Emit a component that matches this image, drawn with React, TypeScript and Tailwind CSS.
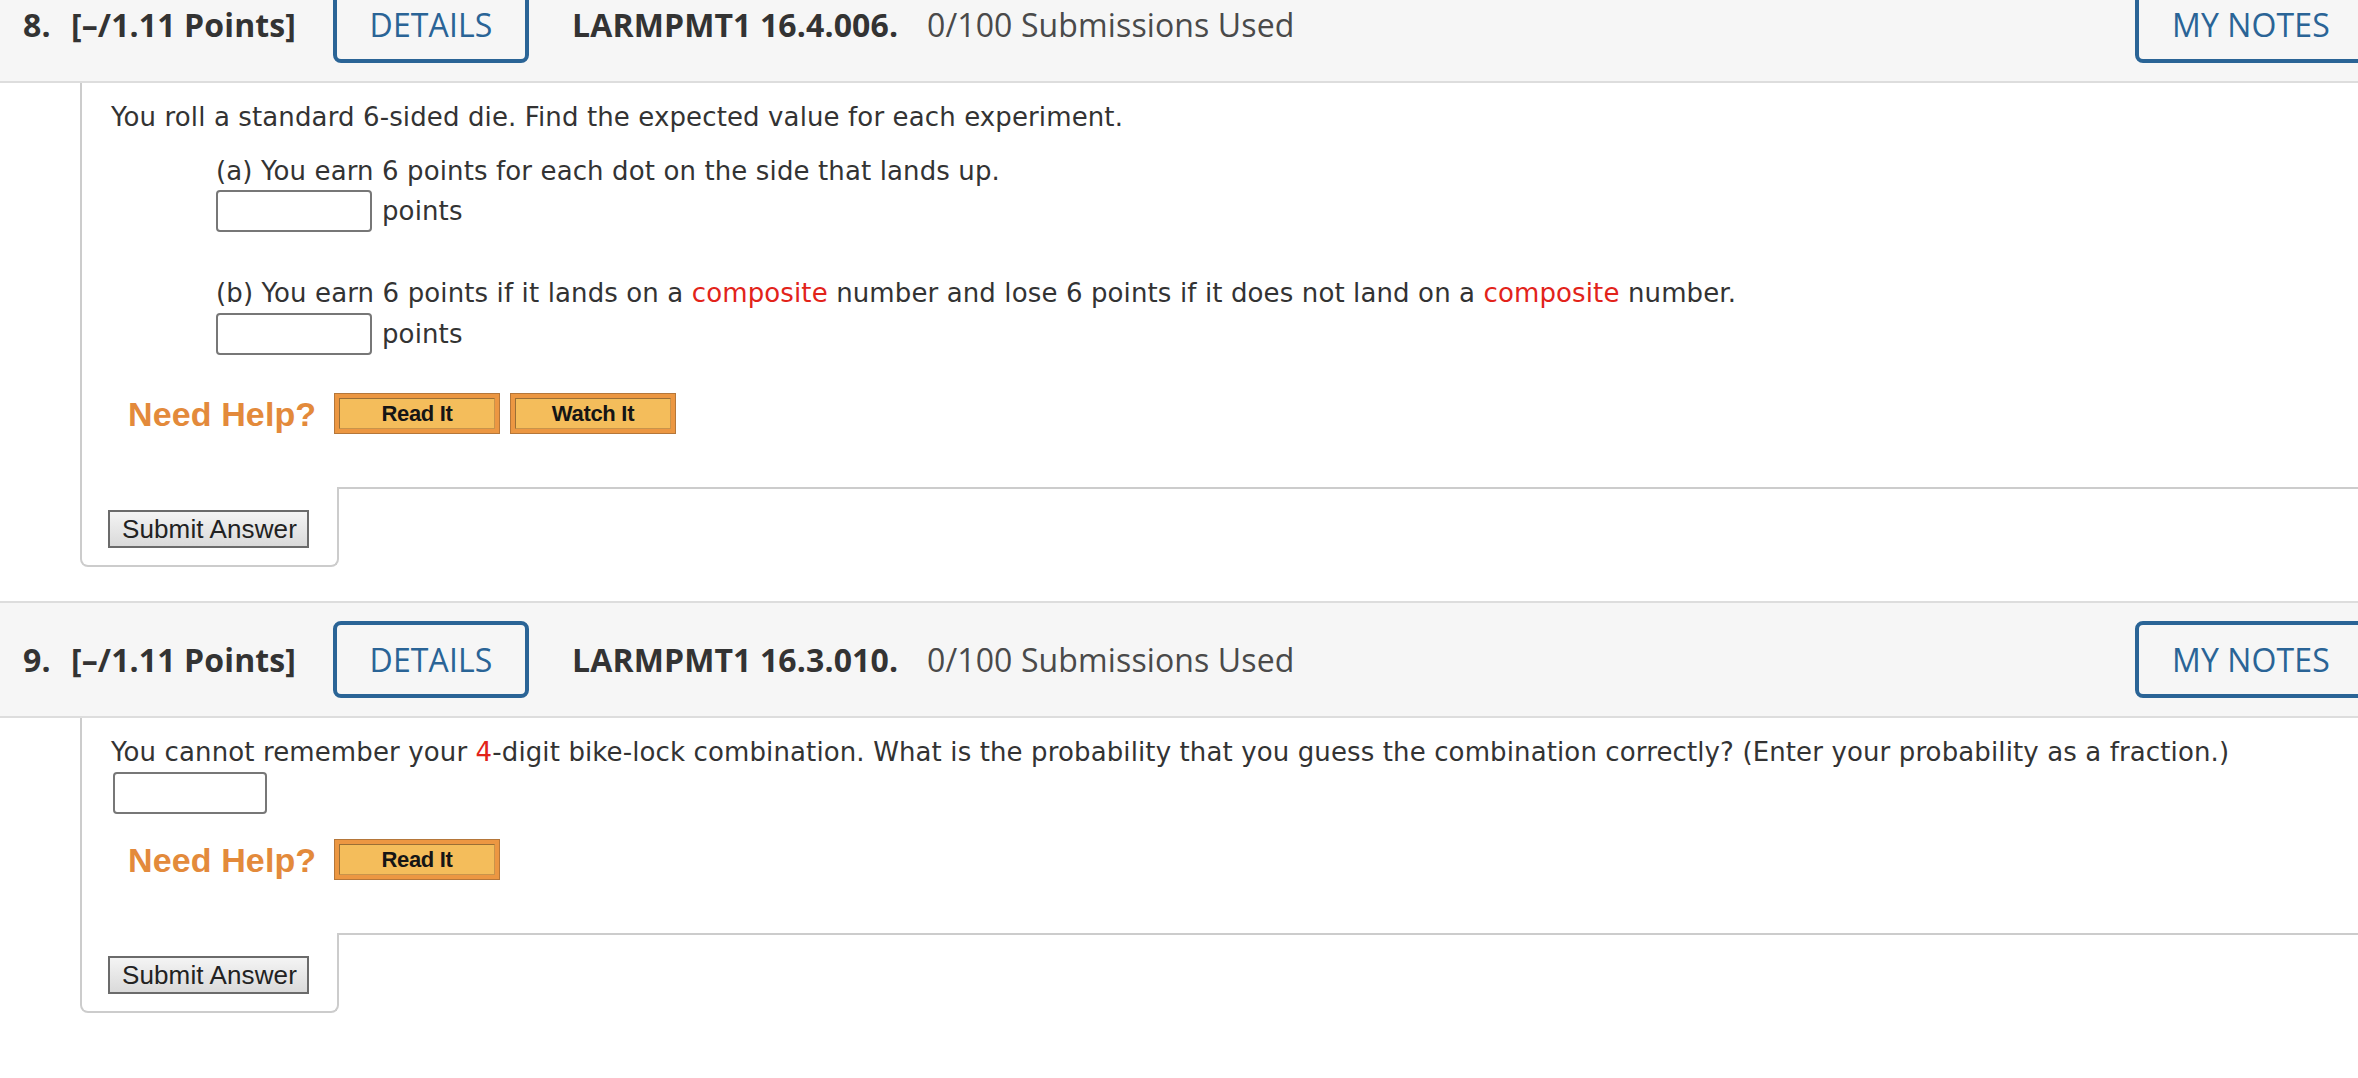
import React from "react";

const HELP_BTN = "h-[41px] w-[166px] border border-[#b5773a] bg-[#ec9742] p-[4px]";

const HelpButton = ({ label }: { label: string }) => (
  <div className={HELP_BTN}>
    <div className="flex h-full items-center justify-center border border-t-[#9a6f35] border-l-[#9a6f35] border-r-[#c9944a] border-b-[#c9944a] bg-[#f4bd5b] font-['Liberation_Sans',Arial,sans-serif] text-[22px] font-bold tracking-[-0.3px] text-[#151515]">
      {label}
    </div>
  </div>
);

const Header = ({ num, code }: { num: number; code: string }) => (
  <div className="flex h-[117px] items-center overflow-hidden border-y-2 border-[#dddddd] bg-[#f6f6f6] font-['Open_Sans',sans-serif] text-[32px] text-[#333333]">
    <div className="flex w-[333px] shrink-0 pl-[23px]">
      <span className="w-[48px] font-bold">{num}.</span>
      <span className="font-bold">[–/1.11 Points]</span>
    </div>
    <div className="flex h-[77px] w-[196px] shrink-0 items-center justify-center rounded-[8px] border-4 border-[#2a6496] text-[#2a6496]">
      DETAILS
    </div>
    <span className="ml-[43px] w-[355px] shrink-0 font-bold">{code}</span>
    <span className="shrink-0 text-[#4a4a4a]">0/100 Submissions Used</span>
    <div className="ml-auto mr-[-28px] flex h-[77px] w-[251px] shrink-0 items-center rounded-[8px] border-4 border-[#2a6496] pl-[33px] text-[#2a6496]">
      MY NOTES
    </div>
  </div>
);

const Input = ({ w }: { w: string }) => (
  <div className={`h-[42px] ${w} rounded-[4px] border-2 border-[#777777] bg-white`} />
);

const SubmitRow = () => (
  <div className="ml-[80px] flex">
    <div className="h-[80px] w-[259px] shrink-0 rounded-b-[8px] border-2 border-t-0 border-[#cccccc] pl-[26px] pt-[23px]">
      <div className="flex h-[38px] w-[201px] items-center border-2 border-[#6b6b6b] bg-gradient-to-b from-[#f4f4f4] to-[#dadada] pl-[12px] font-['Liberation_Sans',Arial,sans-serif] text-[26px] text-[#222222]">
        Submit Answer
      </div>
    </div>
    <div className="flex-1 border-t-2 border-[#cccccc]" />
  </div>
);

const NeedHelp = ({ watch }: { watch?: boolean }) => (
  <div className="flex items-center">
    <span className="ml-[17px] w-[206px] font-['Liberation_Sans',Arial,sans-serif] text-[34px] font-bold text-[#e38a3b]">
      Need Help?
    </span>
    <div className="flex gap-[10px]">
      <HelpButton label="Read It" />
      {watch && <HelpButton label="Watch It" />}
    </div>
  </div>
);

export default function App() {
  return (
    <div className="min-h-screen w-full overflow-hidden bg-white">
      <div className="-mt-[34px] font-['DejaVu_Sans',Verdana,sans-serif] text-[26px] leading-[34px] tracking-[0.12px] text-[#333333]">
        <Header num={8} code="LARMPMT1 16.4.006." />
        <div className="ml-[80px] border-l-2 border-[#cccccc] pb-[53px] pl-[29px] pt-[17px]">
          <p>You roll a standard 6-sided die. Find the expected value for each experiment.</p>
          <div className="ml-[105px] mt-[20px]">
            <p>(a) You earn 6 points for each dot on the side that lands up.</p>
            <div className="mt-[2px] flex items-center gap-[10px]">
              <Input w="w-[156px]" />
              <span>points</span>
            </div>
            <p className="mt-[44px]">
              (b) You earn 6 points if it lands on a <span className="text-[#e2231a]">composite</span> number and
              lose 6 points if it does not land on a <span className="text-[#e2231a]">composite</span> number.
            </p>
            <div className="mt-[3px] flex items-center gap-[10px]">
              <Input w="w-[156px]" />
              <span>points</span>
            </div>
          </div>
          <div className="mt-[38px]">
            <NeedHelp watch />
          </div>
        </div>
        <SubmitRow />

        <div className="mt-[34px]">
          <Header num={9} code="LARMPMT1 16.3.010." />
        </div>
        <div className="ml-[80px] border-l-2 border-[#cccccc] pb-[53px] pl-[29px] pt-[17px]">
          <p>
            You cannot remember your <span className="text-[#e2231a]">4</span>-digit bike-lock combination. What is
            the probability that you guess the combination correctly? (Enter your probability as a fraction.)
          </p>
          <div className="ml-[2px] mt-[3px]">
            <Input w="w-[154px]" />
          </div>
          <div className="mt-[25px]">
            <NeedHelp />
          </div>
        </div>
        <SubmitRow />
      </div>
    </div>
  );
}
